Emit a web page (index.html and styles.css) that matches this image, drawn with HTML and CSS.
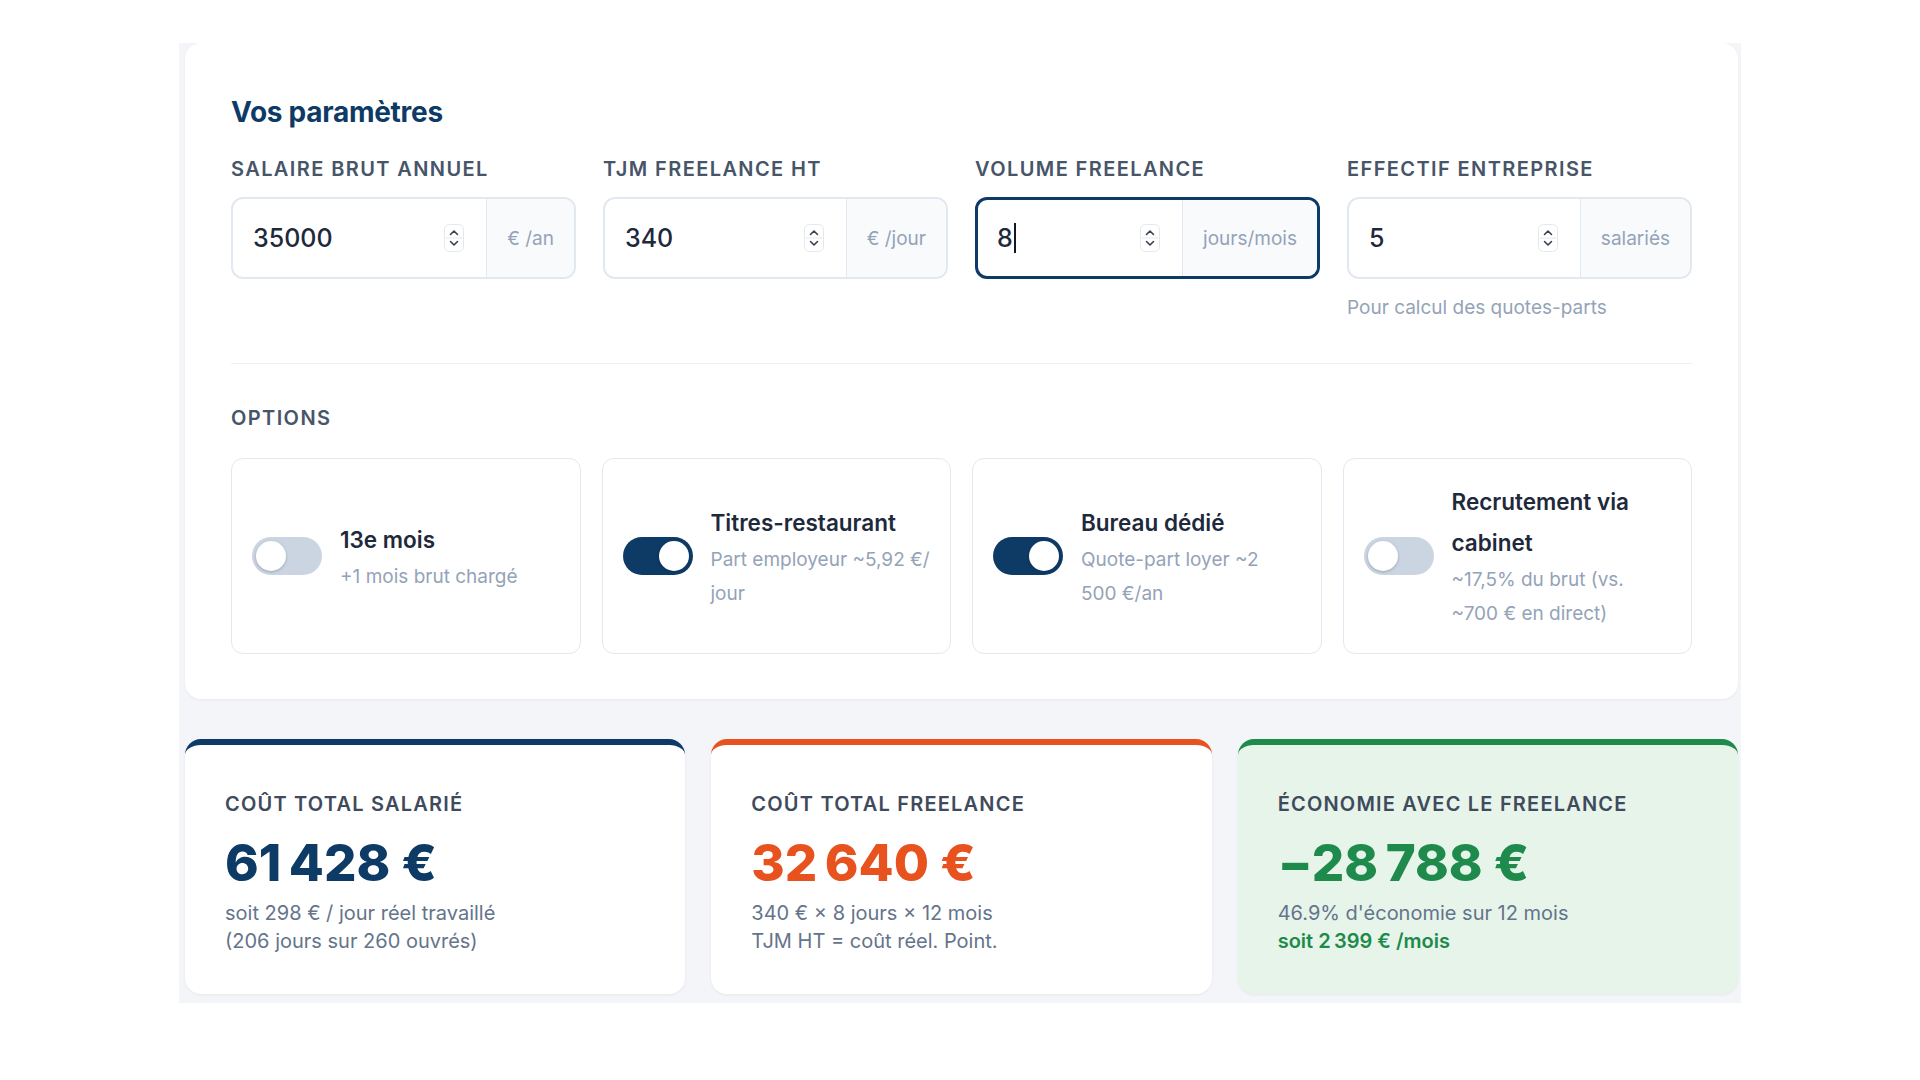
FILE: index.html
```html
<!DOCTYPE html>
<html lang="fr">
<head>
<meta charset="utf-8">
<title>Salarié vs Freelance</title>
<link rel="stylesheet" href="styles.css">
</head>
<body>
<div class="page">
  <section class="card params">
    <h2 class="title">Vos paramètres</h2>
    <div class="fields">
      <div class="field">
        <div class="label">Salaire brut annuel</div>
        <div class="box">
          <div class="value">35000</div>
          <svg class="spin" viewBox="0 0 20 28" width="20" height="28"><rect x="0.5" y="0.5" width="19" height="27" rx="5" fill="#fff" stroke="#e5e7eb"/><line x1="2" y1="14" x2="18" y2="14" stroke="#e5e7eb"/><path d="M6.5 10.5 L10 7 L13.5 10.5" fill="none" stroke="#374151" stroke-width="1.6" stroke-linecap="round" stroke-linejoin="round"/><path d="M6.5 17.5 L10 21 L13.5 17.5" fill="none" stroke="#374151" stroke-width="1.6" stroke-linecap="round" stroke-linejoin="round"/></svg>
          <div class="suffix">€ /an</div>
        </div>
      </div>
      <div class="field">
        <div class="label">TJM freelance HT</div>
        <div class="box">
          <div class="value">340</div>
          <svg class="spin" viewBox="0 0 20 28" width="20" height="28"><rect x="0.5" y="0.5" width="19" height="27" rx="5" fill="#fff" stroke="#e5e7eb"/><line x1="2" y1="14" x2="18" y2="14" stroke="#e5e7eb"/><path d="M6.5 10.5 L10 7 L13.5 10.5" fill="none" stroke="#374151" stroke-width="1.6" stroke-linecap="round" stroke-linejoin="round"/><path d="M6.5 17.5 L10 21 L13.5 17.5" fill="none" stroke="#374151" stroke-width="1.6" stroke-linecap="round" stroke-linejoin="round"/></svg>
          <div class="suffix">€ /jour</div>
        </div>
      </div>
      <div class="field">
        <div class="label">Volume freelance</div>
        <div class="box focused">
          <div class="value">8<span class="caret"></span></div>
          <svg class="spin" viewBox="0 0 20 28" width="20" height="28"><rect x="0.5" y="0.5" width="19" height="27" rx="5" fill="#fff" stroke="#e5e7eb"/><line x1="2" y1="14" x2="18" y2="14" stroke="#e5e7eb"/><path d="M6.5 10.5 L10 7 L13.5 10.5" fill="none" stroke="#374151" stroke-width="1.6" stroke-linecap="round" stroke-linejoin="round"/><path d="M6.5 17.5 L10 21 L13.5 17.5" fill="none" stroke="#374151" stroke-width="1.6" stroke-linecap="round" stroke-linejoin="round"/></svg>
          <div class="suffix">jours/mois</div>
        </div>
      </div>
      <div class="field">
        <div class="label">Effectif entreprise</div>
        <div class="box">
          <div class="value">5</div>
          <svg class="spin" viewBox="0 0 20 28" width="20" height="28"><rect x="0.5" y="0.5" width="19" height="27" rx="5" fill="#fff" stroke="#e5e7eb"/><line x1="2" y1="14" x2="18" y2="14" stroke="#e5e7eb"/><path d="M6.5 10.5 L10 7 L13.5 10.5" fill="none" stroke="#374151" stroke-width="1.6" stroke-linecap="round" stroke-linejoin="round"/><path d="M6.5 17.5 L10 21 L13.5 17.5" fill="none" stroke="#374151" stroke-width="1.6" stroke-linecap="round" stroke-linejoin="round"/></svg>
          <div class="suffix">salariés</div>
        </div>
        <div class="help">Pour calcul des quotes-parts</div>
      </div>
    </div>

    <div class="divider"></div>

    <div class="label options-label">Options</div>
    <div class="options">
      <div class="option">
        <span class="toggle"><span class="knob"></span></span>
        <div class="opt-text">
          <div class="opt-title">13e mois</div>
          <div class="opt-sub">+1 mois brut chargé</div>
        </div>
      </div>
      <div class="option">
        <span class="toggle on"><span class="knob"></span></span>
        <div class="opt-text">
          <div class="opt-title">Titres-restaurant</div>
          <div class="opt-sub">Part employeur ~5,92 €/<br>jour</div>
        </div>
      </div>
      <div class="option">
        <span class="toggle on"><span class="knob"></span></span>
        <div class="opt-text">
          <div class="opt-title">Bureau dédié</div>
          <div class="opt-sub">Quote-part loyer ~2<br>500 €/an</div>
        </div>
      </div>
      <div class="option">
        <span class="toggle"><span class="knob"></span></span>
        <div class="opt-text">
          <div class="opt-title">Recrutement via<br>cabinet</div>
          <div class="opt-sub">~17,5% du brut (vs.<br>~700 € en direct)</div>
        </div>
      </div>
    </div>
  </section>

  <section class="results">
    <div class="result salarie">
      <div class="r-label">Coût total salarié</div>
      <div class="r-value">61&#8239;428 €</div>
      <div class="r-sub">soit 298 € / jour réel travaillé<br>(206 jours sur 260 ouvrés)</div>
    </div>
    <div class="result freelance">
      <div class="r-label">Coût total freelance</div>
      <div class="r-value">32&#8239;640 €</div>
      <div class="r-sub">340 € × 8 jours × 12 mois<br>TJM HT = coût réel. Point.</div>
    </div>
    <div class="result economie">
      <div class="r-label">Économie avec le freelance</div>
      <div class="r-value">−28&#8239;788 €</div>
      <div class="r-sub">46.9% d'économie sur 12 mois<br><span class="r-strong">soit 2&#8239;399 € /mois</span></div>
    </div>
  </section>
</div>
</body>
</html>
```

FILE: styles.css
```css
* { box-sizing: border-box; }

html, body {
  margin: 0;
  padding: 0;
  background: #ffffff;
}

body {
  font-family: "Inter", "Noto Sans", "Liberation Sans", sans-serif;
  color: #1e293b;
}

.page {
  width: 1562px;
  margin: 43px auto 0;
  padding: 0 3px 9px 6px;
  background: #f3f5f8;
}

.card {
  background: #ffffff;
  border-radius: 16px;
  box-shadow: 0 1px 3px rgba(15, 23, 42, 0.05);
}

.params {
  padding: 52px 46px 45px;
}

.title {
  margin: 0;
  font-size: 28px;
  line-height: 34px;
  font-weight: 700;
  color: #0d3b66;
  letter-spacing: -0.01em;
}

.label {
  font-size: 20px;
  line-height: 24px;
  font-weight: 600;
  text-transform: uppercase;
  letter-spacing: 0.07em;
  color: #475569;
}

.fields {
  margin-top: 28px;
  display: grid;
  grid-template-columns: repeat(4, 1fr);
  column-gap: 27px;
}

.field .box {
  margin-top: 16px;
}

.box {
  height: 82px;
  display: flex;
  align-items: stretch;
  border: 2px solid #e2e8f0;
  border-radius: 12px;
  overflow: hidden;
  background: #ffffff;
}

.box.focused {
  border: 3px solid #0d3b66;
}

.value {
  flex: 1;
  display: flex;
  align-items: center;
  padding-left: 20px;
  font-size: 25px;
  font-weight: 500;
  color: #1e293b;
}

.box.focused .value {
  padding-left: 19px;
}

.caret {
  display: inline-block;
  width: 2px;
  height: 30px;
  margin-left: 1px;
  background: #111827;
}

.spin {
  align-self: center;
  flex: none;
  margin-right: 22px;
}

.suffix {
  flex: none;
  display: flex;
  align-items: center;
  padding: 0 20px;
  background: #f8fafc;
  border-left: 1.5px solid #e2e8f0;
  font-size: 19px;
  color: #94a3b8;
}

.help {
  margin-top: 16px;
  font-size: 19px;
  line-height: 26px;
  color: #94a3b8;
}

.divider {
  margin-top: 42px;
  height: 1px;
  background: #eef1f5;
}

.options-label {
  margin-top: 42px;
}

.options {
  margin-top: 28px;
  display: grid;
  grid-template-columns: repeat(4, 1fr);
  column-gap: 21px;
}

.option {
  display: flex;
  align-items: center;
  gap: 18px;
  padding: 22px 20px;
  border: 1px solid #e2e8f0;
  border-radius: 12px;
  background: #ffffff;
}

.toggle {
  position: relative;
  flex: none;
  width: 70px;
  height: 38px;
  border-radius: 19px;
  background: #cbd5e1;
}

.toggle.on {
  background: #0d3b66;
}

.knob {
  position: absolute;
  top: 4px;
  left: 4px;
  width: 30px;
  height: 30px;
  border-radius: 50%;
  background: #ffffff;
  box-shadow: 0 1px 3px rgba(15, 23, 42, 0.25);
}

.toggle.on .knob {
  left: 36px;
}

.opt-text {
  flex: 1;
  min-width: 0;
  white-space: nowrap;
}

.opt-title {
  font-size: 22.5px;
  line-height: 41px;
  font-weight: 600;
  color: #1e293b;
}

.opt-sub {
  font-size: 19px;
  line-height: 34px;
  color: #94a3b8;
}

.results {
  margin-top: 40px;
  display: grid;
  grid-template-columns: repeat(3, 1fr);
  column-gap: 26px;
}

.result {
  background: #ffffff;
  border-radius: 16px;
  border-top: 6px solid #0d3b66;
  padding: 47px 40px 39px;
  box-shadow: 0 1px 3px rgba(15, 23, 42, 0.06);
}

.result.freelance {
  border-top-color: #e8521e;
}

.result.economie {
  border-top-color: #1e8a4c;
  background: #e6f4ea;
}

.r-label {
  font-size: 20px;
  line-height: 24px;
  font-weight: 600;
  text-transform: uppercase;
  letter-spacing: 0.06em;
  color: #3f4b5c;
}

.r-value {
  margin-top: 17px;
  font-size: 51px;
  line-height: 60px;
  font-weight: 800;
  letter-spacing: -0.015em;
  color: #0d3b66;
}

.freelance .r-value {
  color: #e8521e;
}

.economie .r-value {
  color: #1e8a4c;
}

.r-sub {
  margin-top: 6px;
  font-size: 20px;
  line-height: 28px;
  color: #64748b;
}

.r-strong {
  font-weight: 600;
  color: #1e8a4c;
}
```
